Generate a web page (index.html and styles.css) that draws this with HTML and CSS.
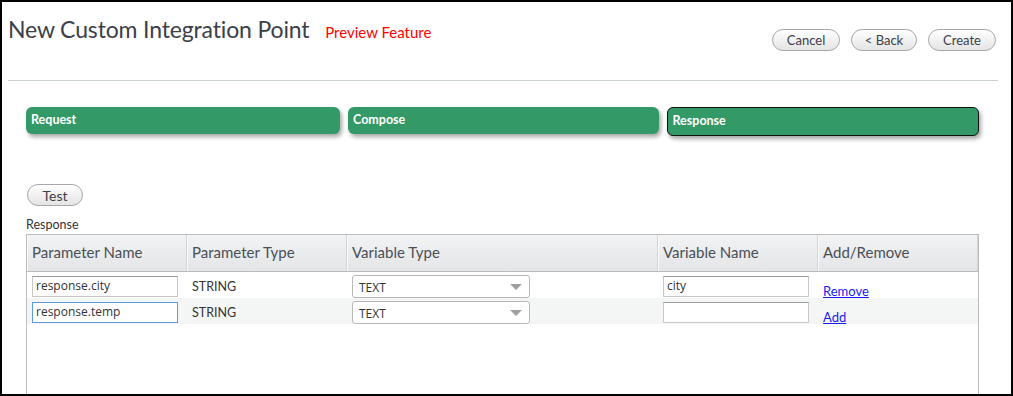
FILE: index.html
```html
<!DOCTYPE html>
<html lang="en">
<head>
    <meta charset="UTF-8">
    <title>New Custom Integration Point</title>
    <link rel="stylesheet" href="styles.css">
</head>
<body>
    <div class="frame">
        <div class="page-header">
            <h1>New Custom Integration Point <span class="preview">Preview Feature</span></h1>
            <div class="actions">
                <button class="pill">Cancel</button>
                <button class="pill back">&lt; Back</button>
                <button class="pill">Create</button>
            </div>
        </div>
        <hr class="divider">

        <div class="steps">
            <div class="step">Request</div>
            <div class="step">Compose</div>
            <div class="step active">Response</div>
        </div>

        <div class="content">
            <button class="pill test-btn">Test</button>
            <div class="section-label">Response</div>

            <div class="grid">
                <div class="grid-head">
                    <div class="col c1">Parameter Name</div>
                    <div class="col c2">Parameter Type</div>
                    <div class="col c3">Variable Type</div>
                    <div class="col c4">Variable Name</div>
                    <div class="col c5">Add/Remove</div>
                </div>
                <div class="grid-row">
                    <div class="cell c1"><input class="field" type="text" value="response.city"></div>
                    <div class="cell c2 type">STRING</div>
                    <div class="cell c3"><div class="select">TEXT<span class="caret"></span></div></div>
                    <div class="cell c4"><input class="field" type="text" value="city"></div>
                    <div class="cell c5"><a href="#" class="link">Remove</a></div>
                </div>
                <div class="grid-row alt">
                    <div class="cell c1"><input class="field focus" type="text" value="response.temp"></div>
                    <div class="cell c2 type">STRING</div>
                    <div class="cell c3"><div class="select">TEXT<span class="caret"></span></div></div>
                    <div class="cell c4"><input class="field" type="text" value=""></div>
                    <div class="cell c5"><a href="#" class="link">Add</a></div>
                </div>
            </div>
        </div>
    </div>
</body>
</html>
```

FILE: styles.css
```css
:root {
    --green: #339966;
    --title-color: #3b4049;
    --text-color: #333;
    --head-text: #4a4f57;
    --grid-border: #bcbcbc;
}

* {
    box-sizing: border-box;
}

body {
    margin: 0;
    font-family: Lato, "Open Sans", sans-serif;
    color: var(--text-color);
    background: #fff;
}

.frame {
    width: 1013px;
    height: 396px;
    border: 2px solid #000;
    overflow: hidden;
}

.page-header {
    display: flex;
    justify-content: space-between;
    align-items: flex-start;
    padding: 13px 15px 0 6px;
    height: 78px;
}

h1 {
    margin: 0;
    font-size: 23px;
    letter-spacing: -0.15px;
    font-weight: normal;
    color: var(--title-color);
}

.preview {
    font-size: 15px;
    letter-spacing: 0;
    color: #f00;
    margin-left: 10px;
}

.actions {
    display: flex;
    gap: 11px;
    padding-top: 14px;
}

.pill {
    height: 22px;
    padding: 0;
    border: 1px solid #a8a8a8;
    border-radius: 11px;
    background: linear-gradient(#ffffff, #e4e4e4);
    font-family: inherit;
    font-size: 13px;
    color: #3b4049;
    cursor: pointer;
}

.actions .pill {
    width: 68px;
}

.actions .back {
    width: 66px;
}

.divider {
    margin: 0 13px 0 6px;
    border: none;
    border-top: 1px solid #c8d0d0;
}

.steps {
    display: flex;
    gap: 8px;
    margin: 26px 32px 0 24px;
    align-items: flex-start;
}

.step {
    flex: 1;
    height: 27px;
    padding: 5px 5px;
    border-radius: 6px;
    background: var(--green);
    color: #fff;
    font-size: 12.5px;
    font-weight: bold;
    box-shadow: 2px 3px 4px rgba(0, 0, 0, 0.35);
}

.step:first-child {
    flex: 0 0 314px;
}

.step.active {
    height: 29px;
    border: 1px solid #111;
    padding: 5px 5px;
}

.content {
    padding: 48px 32px 0 24px;
}

.test-btn {
    width: 56px;
    margin-left: 1px;
    font-size: 14px;
}

.section-label {
    font-size: 12.5px;
    margin: 11px 0 2px;
}

.grid {
    height: 200px;
    border: 1px solid var(--grid-border);
}

.grid-head {
    display: flex;
    height: 37px;
    border-bottom: 1px solid var(--grid-border);
    background: linear-gradient(#f2f3f4, #e3e5e7);
}

.col {
    padding: 8px 5px 0;
    font-size: 15px;
    color: var(--head-text);
    border-right: 1px solid #d2d4d6;
    box-shadow: inset 1px 0 0 #fafafa;
}

.c1, .c2, .c4, .c5 {
    width: 160px;
}

.c3 {
    width: 311px;
}

.grid-row {
    display: flex;
    height: 26px;
}

.grid-row.alt {
    background: #f4f6f6;
}

.cell {
    padding: 4px 5px 0;
    font-size: 12px;
}

.type {
    padding-top: 7px;
    font-size: 12.5px;
}

.field {
    width: 146px;
    height: 21px;
    padding: 0 3px 2px;
    border: 1px solid #c8c8c8;
    border-top-color: #9a9a9a;
    font-family: "Open Sans", sans-serif;
    font-size: 12px;
    color: #333;
    background: #fff;
}

.field.focus {
    border: 1px solid #5a9ae0;
    outline: none;
}

.select {
    position: relative;
    width: 178px;
    height: 23px;
    margin-top: -1px;
    padding: 3px 6px;
    border: 1px solid #b8b8b8;
    border-radius: 3px;
    background: #fff;
    font-family: "Open Sans", sans-serif;
    font-size: 12px;
}

.caret {
    position: absolute;
    right: 7px;
    top: 8px;
    border-left: 6px solid transparent;
    border-right: 6px solid transparent;
    border-top: 6px solid #a0a0a0;
}

.link {
    display: inline-block;
    margin-top: 7px;
    color: #1a1aee;
    font-size: 13px;
    text-decoration: underline;
}
```
